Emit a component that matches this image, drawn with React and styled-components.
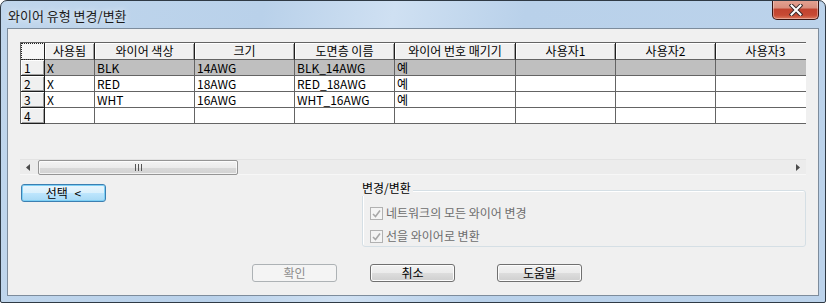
import React from "react";
import styled, { createGlobalStyle } from "styled-components";

const GlobalStyle = createGlobalStyle`
	html, body {
		margin: 0;
		padding: 0;
		background: #ffffff;
	}
	body {
		font-family: "Noto Sans CJK KR", "Liberation Sans", sans-serif;
		font-size: 12px;
		color: #000;
	}
	* {
		box-sizing: border-box;
	}
`;

const columns = [
	{ title: "사용됨", key: "used", width: 50 },
	{ title: "와이어 색상", key: "color", width: 100 },
	{ title: "크기", key: "size", width: 100 },
	{ title: "도면층 이름", key: "layer", width: 100 },
	{ title: "와이어 번호 매기기", key: "numbering", width: 121 },
	{ title: "사용자1", key: "user1", width: 100 },
	{ title: "사용자2", key: "user2", width: 100 },
	{ title: "사용자3", key: "user3", width: 100 },
];

const rows = [
	{ used: "X", color: "BLK", size: "14AWG", layer: "BLK_14AWG", numbering: "예" },
	{ used: "X", color: "RED", size: "18AWG", layer: "RED_18AWG", numbering: "예" },
	{ used: "X", color: "WHT", size: "16AWG", layer: "WHT_16AWG", numbering: "예" },
	{},
];

const Window = styled.div`
	width: 826px;
	height: 303px;
	border: 1px solid #2f3a45;
	border-radius: 7px 7px 2px 2px;
	background: linear-gradient(100deg, #c0d6ec 0%, #b9d1ea 30%, #cfe0f2 45%, #b9d1ea 60%, #bcd3eb 100%);
	display: flex;
	flex-direction: column;
	overflow: hidden;
`;

const TitleBar = styled.div`
	height: 27px;
	display: flex;
	align-items: flex-start;
	padding-left: 7px;
`;

const Title = styled.div`
	margin-top: 6px;
	font-size: 13px;
	line-height: 17px;
	color: #1b1b1b;
	text-shadow: 0 0 6px rgba(255, 255, 255, 0.9);
`;

const CloseButton = styled.div`
	margin-left: auto;
	margin-right: 6px;
	margin-top: -1px;
	width: 47px;
	height: 20px;
	border: 1px solid #3a1512;
	border-top: none;
	border-radius: 0 0 5px 5px;
	background: linear-gradient(#e5a393 0%, #d98f7e 40%, #c2432f 50%, #c74a34 80%, #dd7a5e 100%);
	box-shadow: inset 0 0 0 1px rgba(255, 255, 255, 0.35);
	display: flex;
	align-items: center;
	justify-content: center;
`;

const Client = styled.div`
	flex: 1;
	margin: 0 6px 6px;
	border: 1px solid #7d8c9c;
	background: #f0f0f0;
	padding: 13px 12px 0;
	display: flex;
	flex-direction: column;
`;

const GridFrame = styled.div`
	width: 786px;
	height: 133px;
	display: flex;
	flex-direction: column;
	overflow: hidden;
`;

const Grid = styled.div`
	display: grid;
	grid-template-columns: 24px ${columns.map((c) => `${c.width}px`).join(" ")};
	border-top: 1px solid #646464;
	border-left: 1px solid #646464;
	width: max-content;
`;

const HeaderCell = styled.div`
	height: 17px;
	background: #f0f0f0;
	border-right: 1px solid #1e1e1e;
	border-bottom: 1px solid #646464;
	box-shadow: inset 1px 1px #ffffff, inset -1px 0 #a0a0a0;
	text-align: center;
	line-height: 16px;
	white-space: nowrap;
	overflow: hidden;
`;

const Corner = styled(HeaderCell)`
	outline: 1px dotted #222;
	outline-offset: -1px;
	box-shadow: none;
	background: #f7f7f7;
`;

const RowHead = styled.div`
	height: 16px;
	background: #f0f0f0;
	border-right: 1px solid #1e1e1e;
	border-bottom: 1px solid #1e1e1e;
	box-shadow: inset 1px 1px #ffffff, inset -1px -1px #a0a0a0;
	padding-left: 3px;
	line-height: 15px;
`;

const Cell = styled.div`
	height: 16px;
	background: ${(p) => (p.$selected ? "#bfbfbf" : "#ffffff")};
	border-right: 1px solid #646464;
	border-bottom: 1px solid #646464;
	padding-left: 2px;
	line-height: 15px;
	white-space: nowrap;
	overflow: hidden;
`;

const Spacer = styled.div`
	flex: 1;
`;

const ScrollTrack = styled.div`
	height: 16px;
	display: flex;
	align-items: center;
	background: #ececec;
	border-top: 1px solid #e3e3e3;
	border-bottom: 1px solid #f7f7f7;
	padding: 0 6px;
`;

const ScrollThumb = styled.div`
	margin-left: 8px;
	width: 200px;
	height: 15px;
	border: 1px solid #959595;
	border-radius: 2px;
	background: linear-gradient(#f4f4f4 0%, #ebebeb 50%, #d9d9d9 51%, #d3d3d3 100%);
	box-shadow: inset 0 0 0 1px rgba(255, 255, 255, 0.7);
	display: flex;
	align-items: center;
	justify-content: center;
`;

const Lower = styled.div`
	display: flex;
	align-items: flex-start;
`;

const Button = styled.button`
	width: ${(p) => p.$width || 85}px;
	height: 18px;
	margin: 0;
	margin-left: ${(p) => p.$offset || 0}px;
	padding: 0;
	font-family: "Noto Sans CJK KR", "Liberation Sans", sans-serif;
	font-size: 12px;
	line-height: 16px;
	color: ${(p) => (p.disabled ? "#8d8d8d" : "#000")};
	border-radius: 3px;
	border: 1px solid ${(p) => (p.$focus ? "#3c7fb1" : p.disabled ? "#adb2b5" : "#707070")};
	background: ${(p) =>
		p.disabled
			? "#f4f4f4"
			: p.$focus
			? "linear-gradient(#eaf6fd 0%, #d9f0fc 50%, #bee6fd 51%, #a7d9f5 100%)"
			: "linear-gradient(#f2f2f2 0%, #ebebeb 50%, #dddddd 51%, #cfcfcf 100%)"};
	box-shadow: ${(p) => (p.$focus ? "inset 0 0 0 1px #7ed0f5" : p.disabled ? "none" : "inset 0 0 0 1px #fcfcfc")};
`;

const SelectButton = styled(Button)`
	margin-top: 9px;
	margin-left: 1px;
	word-spacing: 4px;
`;

const GroupBox = styled.div`
	position: relative;
	margin-left: auto;
	margin-top: 15px;
	width: 444px;
	height: 57px;
	border: 1px solid #d5dfe5;
	border-radius: 3px;
	box-shadow: inset 1px 1px #ffffff;
	padding: 15px 0 0 7px;
	display: flex;
	flex-direction: column;
	gap: 9px;
`;

const Legend = styled.div`
	position: absolute;
	top: -11px;
	left: -1px;
	padding-right: 2px;
	background: #f0f0f0;
	line-height: 16px;
`;

const CheckRow = styled.label`
	display: flex;
	align-items: center;
	height: 14px;
	gap: 3px;
	color: #6d6d6d;
	line-height: 14px;
`;

const CheckBox = styled.span`
	width: 13px;
	height: 13px;
	border: 1px solid #b1b1b1;
	background: #f4f4f4;
	display: flex;
	align-items: center;
	justify-content: center;
`;

const ButtonRow = styled.div`
	display: flex;
	margin-top: 17px;
	padding-left: 232px;
	gap: 33px;
`;

const CloseGlyph = () => (
	<svg width="14" height="12" viewBox="0 0 14 12">
		<path d="M2.5 1.5 L11.5 10.5 M11.5 1.5 L2.5 10.5" stroke="#3a2a2a" strokeWidth="4" strokeLinecap="square" />
		<path d="M2.5 1.5 L11.5 10.5 M11.5 1.5 L2.5 10.5" stroke="#ffffff" strokeWidth="2" strokeLinecap="square" />
	</svg>
);

const Check = () => (
	<svg width="9" height="9" viewBox="0 0 9 9">
		<path d="M1 5 L3.5 7.5 L8 1.5" fill="none" stroke="#a8a8a8" strokeWidth="1.6" />
	</svg>
);

const Arrow = ({ dir }) => (
	<svg width="4" height="7" viewBox="0 0 4 7">
		{dir === "left" ? <path d="M4 0 L0 3.5 L4 7 Z" fill="#4a4a4a" /> : <path d="M0 0 L4 3.5 L0 7 Z" fill="#4a4a4a" />}
	</svg>
);

const Grip = () => (
	<svg width="7" height="7" viewBox="0 0 7 7">
		<path d="M0.5 0 V7 M3.5 0 V7 M6.5 0 V7" stroke="#555" strokeWidth="1" />
	</svg>
);

const App = () => {
	return (
		<>
			<GlobalStyle />
			<Window>
				<TitleBar>
					<Title>와이어 유형 변경/변환</Title>
					<CloseButton>
						<CloseGlyph />
					</CloseButton>
				</TitleBar>
				<Client>
					<GridFrame>
						<Grid>
							<Corner />
							{columns.map((c) => (
								<HeaderCell key={c.key}>{c.title}</HeaderCell>
							))}
							{rows.map((row, index) => (
								<React.Fragment key={index}>
									<RowHead>{index + 1}</RowHead>
									{columns.map((c) => (
										<Cell key={c.key} $selected={index === 0}>
											{row[c.key] || ""}
										</Cell>
									))}
								</React.Fragment>
							))}
						</Grid>
						<Spacer />
						<ScrollTrack>
							<Arrow dir="left" />
							<ScrollThumb>
								<Grip />
							</ScrollThumb>
							<Spacer />
							<Arrow dir="right" />
						</ScrollTrack>
					</GridFrame>
					<Lower>
						<SelectButton $focus>선택 &lt;</SelectButton>
						<GroupBox>
							<Legend>변경/변환</Legend>
							<CheckRow>
								<CheckBox>
									<Check />
								</CheckBox>
								네트워크의 모든 와이어 변경
							</CheckRow>
							<CheckRow>
								<CheckBox>
									<Check />
								</CheckBox>
								선을 와이어로 변환
							</CheckRow>
						</GroupBox>
					</Lower>
					<ButtonRow>
						<Button disabled>확인</Button>
						<Button>취소</Button>
						<Button $offset={9}>도움말</Button>
					</ButtonRow>
				</Client>
			</Window>
		</>
	);
};

export default App;
